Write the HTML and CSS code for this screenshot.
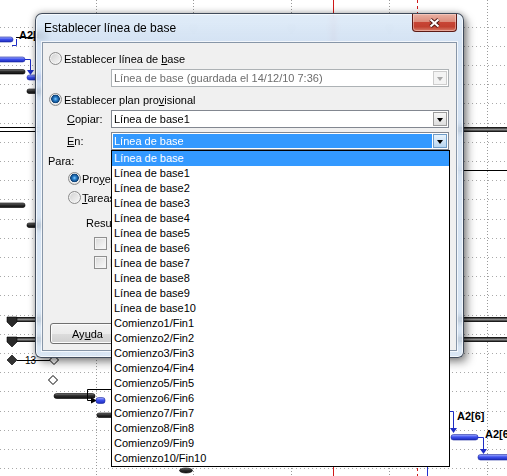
FILE: index.html
```html
<!DOCTYPE html>
<html lang="es">
<head>
  <meta charset="UTF-8">
  <meta name="viewport" content="width=device-width, initial-scale=1.0">
  <title>Establecer línea de base</title>
  <link rel="stylesheet" href="styles.css">
</head>
<body>
  <div class="screen">
    <!-- diagrama de Gantt de fondo -->
    <svg class="gantt" width="507" height="476" viewBox="0 0 507 476">
      <defs>
        <linearGradient id="bar-dark" x1="0" y1="0" x2="0" y2="1">
          <stop offset="0" stop-color="#7a7a7a"/>
          <stop offset=".45" stop-color="#2b2b2b"/>
          <stop offset="1" stop-color="#111"/>
        </linearGradient>
        <linearGradient id="bar-blue" x1="0" y1="0" x2="0" y2="1">
          <stop offset="0" stop-color="#a9b3ff"/>
          <stop offset=".45" stop-color="#3f52ee"/>
          <stop offset="1" stop-color="#1b2ab8"/>
        </linearGradient>
        <linearGradient id="bar-sum" x1="0" y1="0" x2="0" y2="1">
          <stop offset="0" stop-color="#000"/>
          <stop offset=".5" stop-color="#8a8a8a"/>
          <stop offset="1" stop-color="#000"/>
        </linearGradient>
      </defs>

      <path class="grid-h" d="M0 27.5H507M0 46.5H507M0 65.5H507M0 84.5H507M0 103.5H507M0 123.5H507M0 142.5H507M0 161.5H507M0 180.5H507M0 199.5H507M0 219.5H507M0 238.5H507M0 257.5H507M0 276.5H507M0 295.5H507M0 315.5H507M0 334.5H507M0 353.5H507M0 372.5H507M0 391.5H507M0 411.5H507M0 430.5H507M0 449.5H507M0 468.5H507"/>
      <path class="grid-v" d="M96.5 0V476M193.5 0V476M291.5 0V476M389.5 0V476M487.5 0V476"/>
      <path class="line-today" d="M333.5 0V476"/>
      <path class="line-deadline" d="M417.5 0V476"/>
      <path class="line-status" d="M427.5 440V476"/>

      <!-- tareas de la izquierda -->
      <rect class="bar-blue" x="-4" y="37" width="17" height="5" rx="2.5"/>
      <path class="link-blue" d="M12 45.5H16.5V39"/>
      <path class="link" d="M16 37.5H40"/>
      <text class="lbl" x="19" y="39">A2[6]</text>
      <rect class="bar-blue" x="-4" y="57" width="29" height="5" rx="2.5"/>
      <path class="link-blue" d="M25 59.5H30.5V71"/>
      <path class="arrow-blue" d="M27 70H34L30.5 75Z"/>
      <rect class="bar-dark" x="-4" y="69.5" width="29" height="4.5" rx="2"/>
      <rect class="bar-blue" x="27" y="75" width="20" height="5" rx="2.5"/>
      <rect class="bar-dark" x="27" y="89" width="20" height="4.5" rx="2"/>
      <path class="link" d="M0 127.5H40M0 131.5H40"/>
      <rect class="bar-sum" x="440" y="127" width="70" height="5"/>
      <path class="link" d="M300 170.5H507"/>
      <rect class="bar-dark" x="-4" y="203" width="29" height="4.5" rx="2"/>
      <rect class="bar-dark" x="27" y="223" width="20" height="4.5" rx="2"/>

      <!-- tareas de resumen -->
      <rect class="bar-sum" x="7" y="317" width="503" height="5"/>
      <path class="sum-end" d="M7 317H17V322L12 327L7 322Z"/>
      <rect class="bar-sum" x="7" y="337" width="503" height="5"/>
      <path class="sum-end" d="M7 337H17V342L12 347L7 342Z"/>

      <!-- hitos -->
      <path class="link" d="M17 360.5H50"/>
      <path class="milestone" d="M7 360L12 355L17 360L12 365Z"/>
      <text class="date" x="25" y="364">13</text>
      <path class="milestone-open" d="M49.5 360L54 355.5L58.5 360L54 364.5Z"/>
      <path class="milestone-open" d="M48.5 380L53 375.5L57.5 380L53 384.5Z"/>
      <rect class="bar-dark" x="54" y="393.5" width="41" height="5" rx="2.5"/>
      <path class="link" d="M120 389.5H87.5V400.5H92"/>
      <path class="arrow" d="M91 397.5L97 400.5L91 403.5Z"/>
      <rect class="bar-blue" x="96" y="397.5" width="9" height="6" rx="2.5"/>
      <rect class="bar-dark" x="97" y="413" width="30" height="4.5" rx="2"/>
      <ellipse class="bar-dark" cx="186" cy="470.5" rx="6.5" ry="2.5"/>

      <!-- tareas de la derecha -->
      <text class="lbl" x="457" y="420">A2[6]</text>
      <path class="link-blue" d="M450 411.5H453.5V430"/>
      <path class="arrow-blue" d="M450 428H457L453.5 433Z"/>
      <rect class="bar-blue" x="451" y="434.5" width="27" height="5.5" rx="2.5"/>
      <text class="lbl" x="485" y="438">A2[6</text>
      <path class="link-blue" d="M478 437.5H483.5V450"/>
      <path class="arrow-blue" d="M480 449H487L483.5 454Z"/>
      <rect class="bar-blue" x="478" y="454.5" width="35" height="5.5" rx="2.5"/>
    </svg>

    <div class="dialog">
      <div class="titlebar">
        <span class="title">Establecer línea de base</span>
        <span class="close-btn">
          <svg width="13" height="10" viewBox="0 0 13 10">
            <path class="x-edge" d="M2.5 1.5L10.5 8.5M10.5 1.5L2.5 8.5"/>
            <path class="x-mark" d="M2.5 1.5L10.5 8.5M10.5 1.5L2.5 8.5"/>
          </svg>
        </span>
      </div>

      <div class="client">
        <label class="opt row-base"><span class="radio"></span><span class="opt-text">Establecer línea de <u>b</u>ase</span></label>
        <div class="combo combo-base is-disabled">
          <span class="combo-text">Línea de base (guardada el 14/12/10 7:36)</span>
          <span class="combo-arrow"></span>
        </div>

        <label class="opt row-plan"><span class="radio checked"></span><span class="opt-text">Establecer plan pro<u>v</u>isional</span></label>
        <div class="field field-copy">
          <span class="field-label"><u>C</u>opiar:</span>
          <div class="combo">
            <span class="combo-text">Línea de base1</span>
            <span class="combo-arrow"></span>
          </div>
        </div>
        <div class="field field-en">
          <span class="field-label"><u>E</u>n:</span>
          <div class="combo is-focused">
            <span class="combo-text">Línea de base</span>
            <span class="combo-arrow"></span>
          </div>
        </div>

        <!-- esta parte queda tapada por la lista abierta -->
        <div class="group-label">Para:</div>
        <label class="opt row-proy"><span class="radio checked"></span><span class="opt-text">Pro<u>y</u>ecto completo</span></label>
        <label class="opt row-tarea"><span class="radio"></span><span class="opt-text"><u>T</u>areas seleccionadas</span></label>

        <div class="summary-label">Resumir líneas de base:</div>
        <label class="opt check-row"><span class="checkbox"></span><span class="opt-text">Para todas las tareas de resumen</span></label>
        <label class="opt check-row"><span class="checkbox"></span><span class="opt-text">De subtareas a tareas de resumen seleccionadas</span></label>

        <div class="buttons">
          <button class="btn">Ay<u>u</u>da</button>
        </div>
      </div>
    </div>

    <ul class="dropdown">
      <li class="selected">Línea de base</li>
      <li>Línea de base1</li>
      <li>Línea de base2</li>
      <li>Línea de base3</li>
      <li>Línea de base4</li>
      <li>Línea de base5</li>
      <li>Línea de base6</li>
      <li>Línea de base7</li>
      <li>Línea de base8</li>
      <li>Línea de base9</li>
      <li>Línea de base10</li>
      <li>Comienzo1/Fin1</li>
      <li>Comienzo2/Fin2</li>
      <li>Comienzo3/Fin3</li>
      <li>Comienzo4/Fin4</li>
      <li>Comienzo5/Fin5</li>
      <li>Comienzo6/Fin6</li>
      <li>Comienzo7/Fin7</li>
      <li>Comienzo8/Fin8</li>
      <li>Comienzo9/Fin9</li>
      <li>Comienzo10/Fin10</li>
    </ul>
  </div>
</body>
</html>
```

FILE: styles.css
```css
* { box-sizing: border-box; }
html, body {
  margin: 0; padding: 0;
  background: #fff;
}
body {
  font-family: "Liberation Sans", Arial, sans-serif;
  font-size: 11px;
  color: #000;
}
.screen {
  position: relative;
  width: 507px; height: 476px;
  overflow: hidden;
  background: #fff;
}
.gantt { display: block; }

/* --- Gantt --- */
.grid-h { fill: none; stroke: #a9a9a9; stroke-width: 1; stroke-dasharray: 1 3; }
.grid-v { fill: none; stroke: #9a9a9a; stroke-width: 1; stroke-dasharray: 1 2; }
.line-today { stroke: #d01818; stroke-width: 1; }
.line-deadline { stroke: #d01818; stroke-width: 1; stroke-dasharray: 3 3; }
.line-status { stroke: #2030d0; stroke-width: 1; }
.link { fill: none; stroke: #000; stroke-width: 1; }
.link-blue { fill: none; stroke: #1d2cc4; stroke-width: 1; }
.arrow { fill: #000; }
.arrow-blue { fill: #1d2cc4; }
.bar-dark { fill: url(#bar-dark); stroke: #000; stroke-width: .6; }
.bar-blue { fill: url(#bar-blue); stroke: #1a26a0; stroke-width: .6; }
.bar-sum { fill: url(#bar-sum); }
.sum-end { fill: #2a2a2a; stroke: #000; stroke-width: .6; }
.milestone { fill: #333; stroke: #000; stroke-width: .6; }
.milestone-open { fill: #fff; stroke: #000; stroke-width: 1; }
.lbl { font: bold 11px "Liberation Sans", Arial, sans-serif; fill: #000; }
.date { font: 10px "Liberation Sans", Arial, sans-serif; fill: #000; }

/* --- ventana --- */
.dialog {
  position: absolute;
  left: 35px; top: 13px;
  width: 429px; height: 345px;
  padding: 0 6px 6px;
  border: 1px solid rgba(28, 38, 52, .8);
  border-radius: 7px 7px 6px 6px;
  background: linear-gradient(180deg, rgba(220, 234, 248, .86) 0, rgba(201, 219, 240, .8) 28px, rgba(208, 224, 241, .8) 100%);
  backdrop-filter: blur(3px);
  box-shadow: inset 0 0 0 1px rgba(255, 255, 255, .7), 0 0 7px rgba(0, 0, 0, .35), 4px 5px 9px rgba(0, 0, 0, .35);
}
.titlebar {
  height: 28px;
  display: flex;
  justify-content: space-between;
  align-items: center;
}
.title {
  font-size: 12px;
  padding-left: 2px;
}
.close-btn {
  align-self: flex-start;
  width: 45px; height: 18px;
  display: flex;
  align-items: center;
  justify-content: center;
  border: 1px solid #5c1a15;
  border-top: none;
  border-radius: 0 0 4px 4px;
  background: linear-gradient(180deg, #eab1a3 0%, #dc8d7c 45%, #c74535 50%, #c1402f 75%, #d77d6a 100%);
  box-shadow: inset 0 0 0 1px rgba(255, 225, 215, .45);
}
.close-btn svg { display: block; }
.x-edge { fill: none; stroke: #4a1410; stroke-width: 3.8; }
.x-mark { fill: none; stroke: #fff; stroke-width: 2.1; }

.client {
  height: 309px;
  padding-top: 8px;
  background: #f0f0f0;
  border: 1px solid #8796a8;
  box-shadow: 0 0 0 1px rgba(255, 255, 255, .7);
}

.opt {
  display: flex;
  align-items: center;
  height: 15px;
  gap: 2px;
  white-space: nowrap;
}
.opt-text { white-space: nowrap; }
.row-base { margin-left: 6px; }
.row-plan { margin: 5px 0 0 6px; }
.row-proy { margin: 2px 0 0 25px; gap: 1px; }
.row-tarea { margin: 4px 0 0 25px; gap: 1px; }
.check-row { margin: 5px 0 0 51px; gap: 3px; }
.check-row + .check-row { margin-top: 4px; }

.radio {
  width: 13px; height: 13px;
  flex: none;
  border-radius: 50%;
  border: 1px solid #8b8b8b;
  background: linear-gradient(135deg, #d0d0d0, #f9f9f9);
  box-shadow: inset 0 0 0 1px #f4f4f4;
}
.radio.checked {
  background: radial-gradient(circle at 50% 45%, #8fd2ff 0, #2f86d2 1.6px, #114b86 3.6px, #0f3f72 4px, #f2f2f2 4.6px, #d8d8d8 6px);
  box-shadow: none;
}
.checkbox {
  width: 13px; height: 13px;
  flex: none;
  border: 1px solid #8f8f8f;
  background: linear-gradient(135deg, #d9d9d9, #fbfbfb);
  box-shadow: inset 0 0 0 1px #f4f4f4;
}

.combo {
  display: flex;
  width: 338px; height: 18px;
  padding: 1px;
  border: 1px solid #828790;
  background: #fff;
}
.combo-text {
  flex: 1;
  padding-left: 1px;
  line-height: 14px;
  white-space: nowrap;
  overflow: hidden;
}
.combo-arrow {
  position: relative;
  width: 14px;
  border: 1px solid #9c9c9c;
  background: linear-gradient(180deg, #f7f7f7, #dedede);
}
.combo-arrow::after {
  content: "";
  position: absolute;
  left: 3px; top: 5px;
  border-left: 3.5px solid transparent;
  border-right: 3.5px solid transparent;
  border-top: 4px solid #000;
}
.combo-base { margin: 3px 0 0 68px; border-color: #adb2b5; }
.is-disabled .combo-text { color: #6d6d6d; }
.is-disabled .combo-arrow { border-color: #cdcdcd; background: #f4f4f4; }
.is-disabled .combo-arrow::after { border-top-color: #a8a8a8; }
.is-focused .combo-text { background: #3399ff; color: #fff; margin-right: 1px; }
.is-focused .combo-arrow {
  border-color: #6e9cc8;
  background: linear-gradient(180deg, #e8f3fc, #b9d6f0);
}

.field {
  display: flex;
  align-items: center;
  margin-left: 24px;
}
.field-label { width: 44px; }
.field-copy { margin-top: 3px; }
.field-en { margin-top: 4px; }

.group-label {
  margin: 4px 0 0 5px;
  height: 15px; line-height: 15px;
}
.summary-label {
  margin: 11px 0 0 43px;
  height: 15px; line-height: 15px;
  white-space: nowrap;
}

.buttons {
  display: flex;
  margin-top: 53px;
  padding-left: 7px;
}
.btn {
  width: 75px; height: 21px;
  padding: 0;
  font: 11px "Liberation Sans", Arial, sans-serif;
  color: #000;
  border: 1px solid #707070;
  border-radius: 3px;
  background: linear-gradient(180deg, #f2f2f2 0, #ebebeb 50%, #dddddd 50%, #cfcfcf 100%);
  box-shadow: inset 0 0 0 1px #fcfcfc;
}

/* --- lista desplegable --- */
.dropdown {
  position: absolute;
  left: 111px; top: 150px;
  width: 339px;
  margin: 0; padding: 0;
  list-style: none;
  border: 1px solid #000;
  background: #fff;
}
.dropdown li {
  height: 15px;
  line-height: 15px;
  padding-left: 2px;
  white-space: nowrap;
}
.dropdown li.selected {
  background: #3399ff;
  color: #fff;
}
```
